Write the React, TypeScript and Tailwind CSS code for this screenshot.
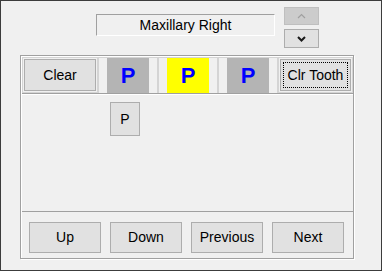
const cells = [
  { fill: 'bg-[#b4b4b4]', width: 'w-[60px]' },
  { fill: 'bg-[#ffff00]', width: 'w-[60px]' },
  { fill: 'bg-[#b4b4b4]', width: 'w-[60px]' },
];

const navButtons = ['Up', 'Down', 'Previous', 'Next'];

function Chevron({ up, color }: { up?: boolean; color: string }) {
  return (
    <svg width="9" height="6" viewBox="0 0 9 6">
      <path
        d={up ? 'M1 5 L4.5 1.5 L8 5' : 'M1 1 L4.5 4.5 L8 1'}
        fill="none"
        stroke={color}
        strokeWidth={up ? 1.2 : 2}
      />
    </svg>
  );
}

export default function App() {
  return (
    <div className="w-[382px] h-[271px] bg-[#f0f0f0] border border-[#3c3c3c] font-['Liberation_Sans',Arial,sans-serif] text-[14px] text-black overflow-hidden">
      {/* Arch label + scroll buttons */}
      <div className="flex pt-[6px] pl-[95px]">
        <div className="mt-[7px] w-[179px] h-[22px] border border-t-[#a0a0a0] border-l-[#a0a0a0] border-r-white border-b-white flex items-center justify-center leading-none">
          Maxillary Right
        </div>
        <div className="ml-[9px] flex flex-col gap-[4px]">
          <div className="w-[35px] h-[18px] bg-[#cccccc] border border-[#bfbfbf] flex items-center justify-center">
            <Chevron up color="#a0a0a0" />
          </div>
          <div className="w-[35px] h-[19px] bg-[#e1e1e1] border border-[#adadad] flex items-center justify-center">
            <Chevron color="#1a1a1a" />
          </div>
        </div>
      </div>

      {/* Tooth group */}
      <div className="mt-[7px] ml-[19px] w-[334px] h-[204px] border border-[#a0a0a0] shadow-[inset_1px_1px_0_#fff,1px_1px_0_#fff] flex flex-col pl-[1px] pt-[1px]">
        <div className="flex h-[37px] border-b border-[#a0a0a0] shadow-[0_1px_0_#fff]">
          <div className="w-[76px] h-[36px] border border-[#d4d4d4] p-[1px]">
            <div className="w-full h-full bg-[#e1e1e1] border border-[#adadad] flex items-center justify-center">
              Clear
            </div>
          </div>
          {cells.map((c, i) => (
            <div key={i} className={`${c.width} h-[36px] border border-[#d4d4d4] border-b-0 flex justify-center`}>
              <div className={`w-[42px] h-full ${c.fill} flex items-center justify-center text-[#0000ff] font-bold text-[22px] leading-none`}>
                P
              </div>
            </div>
          ))}
          <div className="w-[75px] h-[36px] border border-[#d4d4d4] p-[1px]">
            <div className="w-full h-full bg-[#e1e1e1] border border-[#adadad] p-[2px]">
              <div className="w-full h-full border border-dotted border-black flex items-center justify-center">
                Clr Tooth
              </div>
            </div>
          </div>
        </div>

        <div className="h-[118px] border-b border-[#a0a0a0] pt-[8px] pl-[88px]">
          <div className="w-[30px] h-[34px] bg-[#e1e1e1] border border-[#adadad] flex items-center justify-center">
            P
          </div>
        </div>

        <div className="flex gap-[9px] pt-[10px] pl-[7px]">
          {navButtons.map((label) => (
            <div
              key={label}
              className="w-[72px] h-[31px] bg-[#e1e1e1] border border-[#adadad] flex items-center justify-center"
            >
              {label}
            </div>
          ))}
        </div>
      </div>
    </div>
  );
}
